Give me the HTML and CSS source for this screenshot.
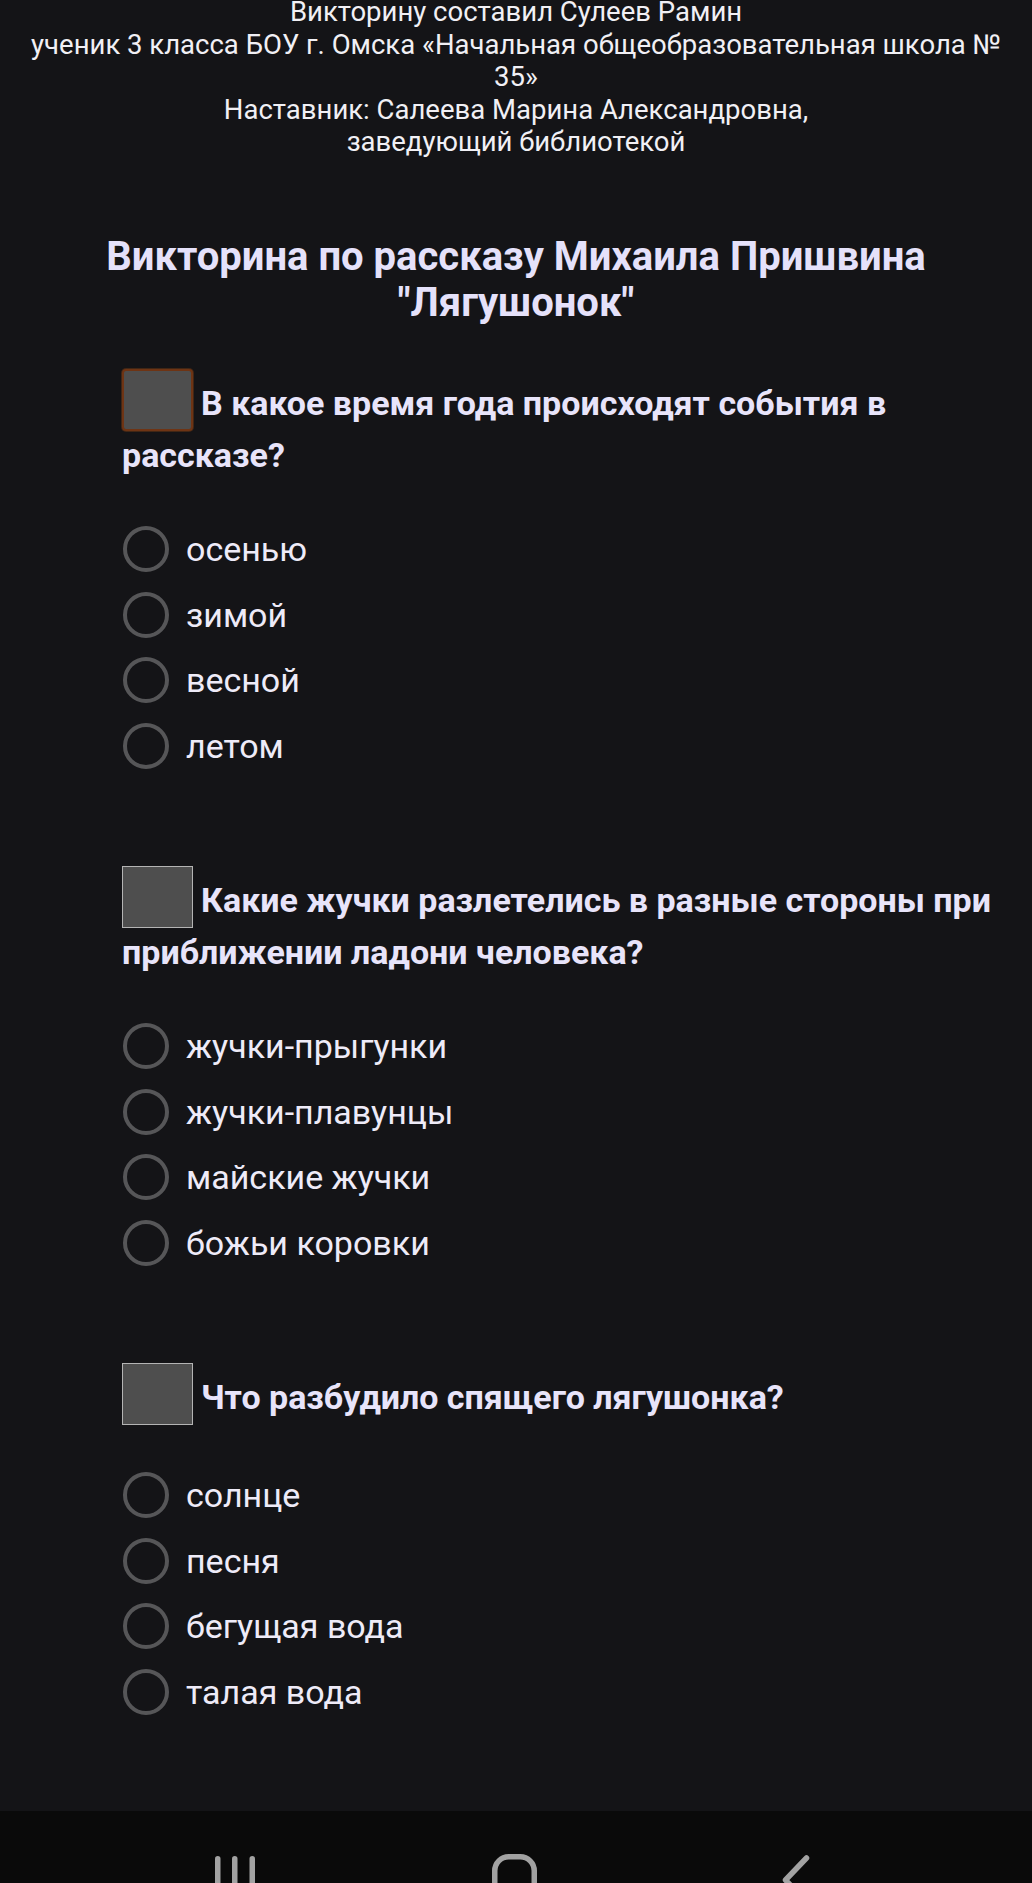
FILE: index.html
```html
<!DOCTYPE html>
<html lang="ru">
<head>
<meta charset="utf-8">
<title>Викторина</title>
<link rel="stylesheet" href="styles.css">
</head>
<body>
<header class="credits">
  <p>Викторину составил Сулеев Рамин</p>
  <p>ученик 3 класса БОУ г. Омска «Начальная общеобразовательная школа № 35»</p>
  <p>Наставник: Салеева Марина Александровна,</p>
  <p>заведующий библиотекой</p>
</header>

<h1 class="title">Викторина по рассказу Михаила Пришвина "Лягушонок"</h1>

<main class="quiz">
  <section class="question">
    <h2 class="q-text"><span class="check check-focus"></span>В какое время года происходят события в рассказе?</h2>
    <ul class="options">
      <li class="option"><span class="radio"></span><span>осенью</span></li>
      <li class="option"><span class="radio"></span><span>зимой</span></li>
      <li class="option"><span class="radio"></span><span>весной</span></li>
      <li class="option"><span class="radio"></span><span>летом</span></li>
    </ul>
  </section>

  <section class="question">
    <h2 class="q-text"><span class="check"></span>Какие жучки разлетелись в разные стороны при приближении ладони человека?</h2>
    <ul class="options">
      <li class="option"><span class="radio"></span><span>жучки-прыгунки</span></li>
      <li class="option"><span class="radio"></span><span>жучки-плавунцы</span></li>
      <li class="option"><span class="radio"></span><span>майские жучки</span></li>
      <li class="option"><span class="radio"></span><span>божьи коровки</span></li>
    </ul>
  </section>

  <section class="question">
    <h2 class="q-text"><span class="check"></span>Что разбудило спящего лягушонка?</h2>
    <ul class="options">
      <li class="option"><span class="radio"></span><span>солнце</span></li>
      <li class="option"><span class="radio"></span><span>песня</span></li>
      <li class="option"><span class="radio"></span><span>бегущая вода</span></li>
      <li class="option"><span class="radio"></span><span>талая вода</span></li>
    </ul>
  </section>
</main>

<nav class="sysnav">
  <span class="nav-cell">
    <svg width="60" height="40" viewBox="0 0 60 40"><rect x="10" y="2" width="5.5" height="44" rx="2.75"/><rect x="27" y="2" width="5.5" height="44" rx="2.75"/><rect x="44.5" y="2" width="5.5" height="44" rx="2.75"/></svg>
  </span>
  <span class="nav-cell">
    <svg width="60" height="40" viewBox="0 0 60 40"><rect class="stroke" x="8.75" y="2.75" width="39.5" height="60" rx="14"/></svg>
  </span>
  <span class="nav-cell">
    <svg width="60" height="40" viewBox="0 0 60 40"><polyline class="stroke" points="38.5,4 17.5,26 38.5,48"/></svg>
  </span>
</nav>
</body>
</html>
```

FILE: styles.css
```css
html, body {
  margin: 0;
  padding: 0;
}

body {
  background: #141417;
  color: #ece9f8;
  font-family: Roboto, "Noto Sans", "Liberation Sans", sans-serif;
  min-height: 1883px;
}

.credits {
  margin-top: -4px;
  padding: 0 12px;
  text-align: center;
  font-size: 27.5px;
  line-height: 32.5px;
  color: #f1f0f5;
}

.credits p {
  margin: 0;
}

.title {
  margin: 75px 0 0;
  padding: 0 40px;
  text-align: center;
  font-size: 40px;
  line-height: 46px;
  font-weight: 700;
  color: #e5e1fa;
}

.quiz {
  padding: 0 20px 0 122px;
  margin-top: 43.5px;
}

.question + .question {
  margin-top: 97px;
}

.q-text {
  margin: 0;
  font-size: 34px;
  line-height: 48px;
  font-weight: 700;
  color: #e8e4fa;
}

.check {
  display: inline-block;
  box-sizing: border-box;
  width: 71px;
  height: 62px;
  margin-right: 8px;
  vertical-align: -16px;
  background: #4e4e4e;
  border: 1px solid #b4b4b4;
}

.check-focus {
  border: 2px solid #6e3414;
  border-radius: 4px;
  box-shadow: 0 0 0 1px rgba(120, 60, 20, 0.45);
}

.options {
  list-style: none;
  margin: 47px 0 0;
  padding: 0;
  display: flex;
  flex-direction: column;
  gap: 19.67px;
}

.option {
  display: flex;
  align-items: center;
  gap: 17px;
  height: 46px;
  font-size: 34px;
  color: #eeebf8;
}

.radio {
  flex: none;
  box-sizing: border-box;
  width: 46px;
  height: 46px;
  margin-left: 1px;
  border: 4.5px solid #565658;
  border-radius: 50%;
}

.sysnav {
  position: fixed;
  left: 0;
  right: 0;
  bottom: 0;
  height: 72px;
  background: #0a0a0a;
  display: flex;
  justify-content: center;
  gap: 221.5px;
  padding-top: 43px;
  box-sizing: border-box;
  overflow: hidden;
}

.sysnav::before {
  content: "";
  position: absolute;
  left: 0;
  right: 0;
  top: -11px;
  height: 11px;
  background: linear-gradient(#141417, #18181b);
}

.nav-cell {
  width: 60px;
  height: 40px;
}

.nav-cell svg {
  display: block;
  fill: #a2a2a2;
}

.nav-cell .stroke {
  fill: none;
  stroke: #a2a2a2;
  stroke-width: 5.5;
  stroke-linecap: round;
  stroke-linejoin: round;
}
```
